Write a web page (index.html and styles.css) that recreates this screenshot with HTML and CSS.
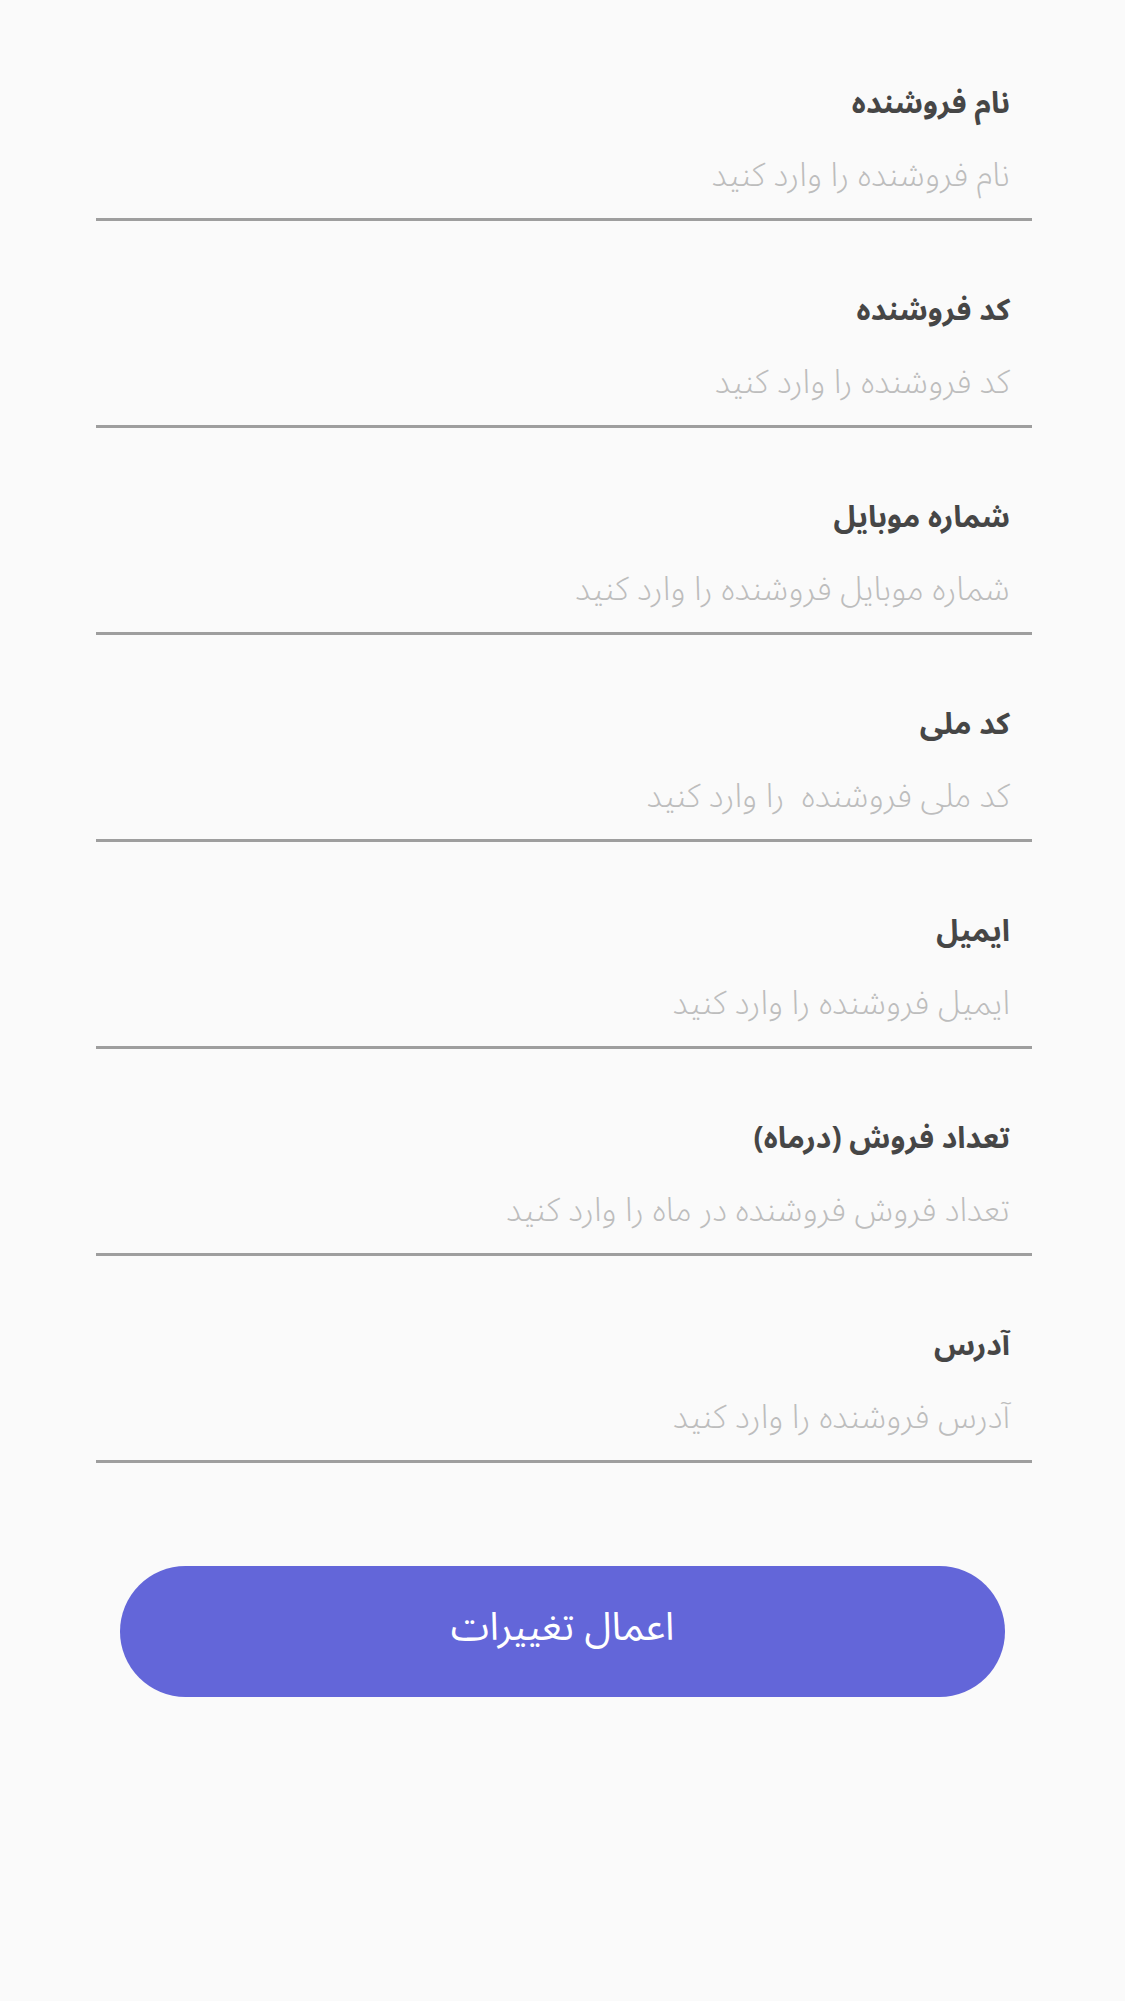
FILE: index.html
```html
<!DOCTYPE html>
<html lang="fa" dir="rtl">
<head>
<meta charset="utf-8">
<title>ویرایش فروشنده</title>
<link rel="stylesheet" href="styles.css">
</head>
<body>
<main class="page">
  <form class="form">
    <div class="field">
      <div class="label">نام فروشنده</div>
      <div class="placeholder">نام فروشنده را وارد کنید</div>
    </div>
    <div class="field">
      <div class="label">کد فروشنده</div>
      <div class="placeholder">کد فروشنده را وارد کنید</div>
    </div>
    <div class="field">
      <div class="label">شماره موبایل</div>
      <div class="placeholder">شماره موبایل فروشنده را وارد کنید</div>
    </div>
    <div class="field">
      <div class="label">کد ملی</div>
      <div class="placeholder">کد ملی فروشنده&nbsp; را وارد کنید</div>
    </div>
    <div class="field">
      <div class="label">ایمیل</div>
      <div class="placeholder">ایمیل فروشنده را وارد کنید</div>
    </div>
    <div class="field">
      <div class="label">تعداد فروش (درماه)</div>
      <div class="placeholder">تعداد فروش فروشنده در ماه را وارد کنید</div>
    </div>
    <div class="field">
      <div class="label">آدرس</div>
      <div class="placeholder">آدرس فروشنده را وارد کنید</div>
    </div>
    <div class="actions">
      <button type="button" class="btn">اعمال تغییرات</button>
    </div>
  </form>
</main>
</body>
</html>
```

FILE: styles.css
```css
html, body {
  margin: 0;
  padding: 0;
  background: #fafafa;
}
body {
  font-family: "Noto Sans Arabic", "Vazirmatn", "DejaVu Sans", sans-serif;
  width: 1125px;
  min-height: 2001px;
}
.page {
  padding: 0 93px 0 96px;
}
.form {
  display: flex;
  flex-direction: column;
  padding-top: 82px;
}
.field {
  display: flex;
  flex-direction: column;
  padding: 0 22px 23px 22px;
  border-bottom: 3px solid #9e9e9e;
  margin-bottom: 68px;
}
.label {
  height: 40px;
  line-height: 44px;
  font-size: 30px;
  font-weight: 700;
  color: #464646;
  white-space: nowrap;
}
.placeholder {
  margin-top: 33px;
  height: 40px;
  line-height: 42px;
  font-size: 33px;
  font-weight: 300;
  color: #bdbdbd;
  white-space: nowrap;
}
.actions {
  display: flex;
  justify-content: center;
  margin-top: 35px;
  margin-left: -3px;
}
.btn {
  width: 885px;
  height: 131px;
  border: none;
  border-radius: 66px;
  background: #6366d9;
  color: #ffffff;
  font-family: inherit;
  font-size: 39px;
  font-weight: 400;
  padding: 0 0 8px 0;
  cursor: pointer;
}
```
